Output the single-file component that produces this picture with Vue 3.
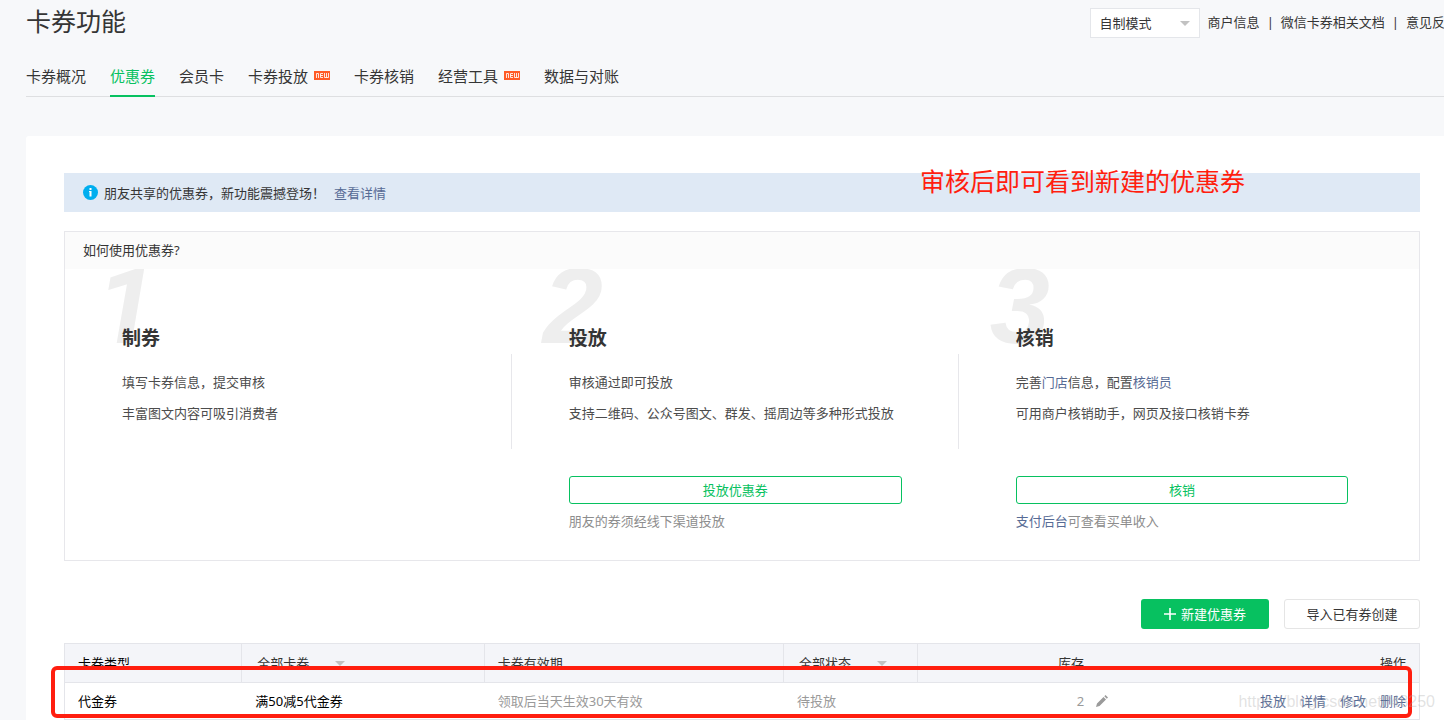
<script setup>
import { ref } from 'vue'

const tabs = [
  { label: '卡券概况' },
  { label: '优惠券', active: true },
  { label: '会员卡' },
  { label: '卡券投放', fresh: true },
  { label: '卡券核销' },
  { label: '经营工具', fresh: true },
  { label: '数据与对账' },
]

const mode = ref('自制模式')
const cardFilter = ref('全部卡券')
const stateFilter = ref('全部状态')

const coupons = [
  { type: '代金券', name: '满50减5代金券', period: '领取后当天生效30天有效', state: '待投放', stock: 2 },
]
const actions = ['投放', '详情', '修改', '删除']
</script>

<template>
  <div class="page">
    <header class="top">
      <h1>卡券功能</h1>
      <div class="tools">
        <span class="drop boxed">
          <select v-model="mode" aria-label="模式">
            <option>自制模式</option>
          </select>
          <svg class="caret" viewBox="0 0 10 5" aria-hidden="true"><path d="M0 0h10L5 5z" /></svg>
        </span>
        <nav class="links" aria-label="帮助">
          <a href="#">商户信息</a><i>|</i><a href="#">微信卡券相关文档</a><i>|</i><a href="#">意见反馈</a>
        </nav>
      </div>
    </header>

    <nav class="tabs" aria-label="卡券">
      <a v-for="t in tabs" :key="t.label" href="#" :class="{ active: t.active }">
        {{ t.label }}
        <svg v-if="t.fresh" class="new" viewBox="0 0 16 9" role="img" aria-label="new">
          <rect width="16" height="9" fill="#ff5a26" />
          <g fill="none" stroke="#fff" stroke-opacity="0.85">
            <path d="M2.5 7V2.5H4.5V7" />
            <path d="M9 2.5H6.5V6.5H9M6.5 4.5H9" />
            <path d="M10.5 2V6.5H14.5V2M12.5 2V6.5" />
          </g>
        </svg>
      </a>
    </nav>

    <main class="card">
      <div class="notice">
        <svg class="info" viewBox="0 0 15 15" aria-hidden="true">
          <circle cx="7.5" cy="7.5" r="7.5" fill="#00aeef" />
          <path d="M6.5 3h2v2h-2zM6 6h2.500v5.500h-2V7H6z" fill="#fff" />
        </svg>
        <span>朋友共享的优惠券，新功能震撼登场！</span>
        <a href="#">查看详情</a>
        <strong class="remark">审核后即可看到新建的优惠券</strong>
      </div>

      <section class="guide">
        <h2>如何使用优惠券?</h2>
        <div class="steps">
          <article class="step">
            <span class="num one">1</span>
            <h3>制券</h3>
            <div class="desc">
              <p>填写卡券信息，提交审核</p>
              <p>丰富图文内容可吸引消费者</p>
            </div>
          </article>
          <article class="step">
            <span class="num">2</span>
            <h3>投放</h3>
            <div class="desc">
              <p>审核通过即可投放</p>
              <p>支持二维码、公众号图文、群发、摇周边等多种形式投放</p>
            </div>
            <div class="act">
              <button type="button">投放优惠券</button>
              <p>朋友的券须经线下渠道投放</p>
            </div>
          </article>
          <article class="step">
            <span class="num">3</span>
            <h3>核销</h3>
            <div class="desc">
              <p>完善<a href="#">门店</a>信息，配置<a href="#">核销员</a></p>
              <p>可用商户核销助手，网页及接口核销卡券</p>
            </div>
            <div class="act">
              <button type="button">核销</button>
              <p><a href="#">支付后台</a>可查看买单收入</p>
            </div>
          </article>
        </div>
      </section>

      <div class="bar">
        <button type="button" class="primary">
          <svg viewBox="0 0 12 12" aria-hidden="true"><path d="M6 0v12M0 6h12" stroke="#fff" stroke-width="1.6" /></svg>
          新建优惠券
        </button>
        <button type="button" class="plain">导入已有券创建</button>
      </div>

      <div class="list">
        <table>
          <colgroup>
            <col class="c1" /><col class="c2" /><col class="c3" /><col class="c4" /><col class="c5" /><col />
          </colgroup>
          <thead>
            <tr>
              <th class="dark">卡券类型</th>
              <th>
                <span class="drop">
                  <select v-model="cardFilter" aria-label="卡券"><option>全部卡券</option></select>
                  <svg class="caret" viewBox="0 0 10 5" aria-hidden="true"><path d="M0 0h10L5 5z" /></svg>
                </span>
              </th>
              <th>卡券有效期</th>
              <th>
                <span class="drop">
                  <select v-model="stateFilter" aria-label="状态"><option>全部状态</option></select>
                  <svg class="caret" viewBox="0 0 10 5" aria-hidden="true"><path d="M0 0h10L5 5z" /></svg>
                </span>
              </th>
              <th class="stock">库存</th>
              <th class="ops">操作</th>
            </tr>
          </thead>
          <tbody>
            <tr v-for="c in coupons" :key="c.name">
              <td class="dark">{{ c.type }}</td>
              <td class="dark">{{ c.name }}</td>
              <td>{{ c.period }}</td>
              <td>{{ c.state }}</td>
              <td>
                <div class="qty">
                  <span>{{ c.stock }}</span>
                  <button type="button" class="edit" aria-label="修改库存">
                    <svg viewBox="0 0 12 12" aria-hidden="true">
                      <path d="M0 12l1-3.500L7.500 2 10 4.500 3.500 11zM8.300 1.200L9.500 0 12 2.500 10.800 3.700z" />
                    </svg>
                  </button>
                </div>
              </td>
              <td>
                <div class="acts"><a v-for="a in actions" :key="a" href="#">{{ a }}</a></div>
              </td>
            </tr>
          </tbody>
        </table>
        <div class="frame"></div>
        <span class="mark">https://blog.csdn.net/f48250</span>
      </div>
    </main>
  </div>
</template>

<style>
body {
  margin: 0;
  background: #f7f8fa;
}
</style>

<style scoped>
.page {
  box-sizing: border-box;
  min-height: 100vh;
  padding: 8px 0 0 26px;
  overflow: hidden;
  background: #f7f8fa;
  color: #353535;
  font: 13px/20px "Noto Sans", "Noto Sans CJK SC", sans-serif;
}
* {
  box-sizing: border-box;
}
h1, h2, h3, p {
  margin: 0;
  font-weight: 400;
}
a {
  color: #576b95;
  text-decoration: none;
}
button, select {
  margin: 0;
  padding: 0;
  font: inherit;
  color: inherit;
  background: none;
  border: 0;
  cursor: pointer;
}
.top {
  display: flex;
  justify-content: space-between;
  height: 48px;
}
h1 {
  font-size: 25px;
  line-height: 26px;
}
.tools {
  display: flex;
  align-items: flex-start;
  gap: 8px;
  margin-right: -14px;
  white-space: nowrap;
}
.drop {
  display: inline-flex;
  align-items: center;
  width: 90px;
}
.drop select {
  width: 100%;
  padding-left: 2px;
  appearance: none;
}
.drop .caret {
  flex: none;
  width: 10px;
  height: 5px;
  margin-left: -10px;
  fill: #c2c2c2;
  pointer-events: none;
}
.boxed {
  width: 110px;
  height: 30px;
  padding: 0 9px 0 7px;
  background: #fff;
  border: 1px solid #e4e6ea;
}
.links {
  line-height: 28px;
}
.links a {
  color: #353535;
}
.links i {
  padding: 0 7px;
  font-style: normal;
}
.tabs {
  display: flex;
  gap: 24px;
  height: 41px;
  border-bottom: 1px solid #dedfe1;
  font-size: 15px;
  line-height: 40px;
}
.tabs a {
  display: flex;
  align-items: center;
  gap: 6px;
  height: 41px;
  border-bottom: 2px solid transparent;
  color: #353535;
  white-space: nowrap;
}
.tabs .active {
  color: #07c160;
  border-color: #07c160;
}
.new {
  width: 16px;
  height: 9px;
}
.card {
  margin-top: 39px;
  padding: 37px 24px 0 38px;
  background: #fff;
  border-top-left-radius: 3px;
}
.notice {
  position: relative;
  display: flex;
  align-items: center;
  height: 39px;
  padding-left: 19px;
  background: #dfe9f5;
}
.info {
  width: 15px;
  height: 15px;
  margin-right: 6px;
}
.notice a {
  margin-left: 9px;
}
.remark {
  position: absolute;
  top: -10px;
  right: 175px;
  color: #ff1e0f;
  font-size: 25px;
  font-weight: 400;
  line-height: 36px;
  white-space: nowrap;
}
.guide {
  margin-top: 19px;
  border: 1px solid #e7e7eb;
}
h2 {
  padding: 0 18px;
  background: #fbfbfb;
  font-size: 13px;
  line-height: 37px;
}
.steps {
  display: grid;
  grid-template-columns: repeat(3, 33%);
  min-height: 291px;
}
.step {
  position: relative;
  overflow: hidden;
  padding-top: 54px;
}
.num {
  position: absolute;
  top: -26px;
  left: 31px;
  color: #eee;
  font: italic bold 108px/126px "Liberation Sans", Arial, sans-serif;
}
.one {
  font-family: Roboto, "Liberation Sans", sans-serif;
}
h3 {
  position: relative;
  padding-left: 57px;
  font-size: 19px;
  font-weight: 700;
  line-height: 30px;
}
.desc {
  position: relative;
  height: 95px;
  margin-top: 1px;
  padding: 13px 56px 0 57px;
  border-right: 1px solid #e7e7eb;
  color: #4c4c4c;
  line-height: 31px;
}
.step:last-child .desc {
  border-color: transparent;
}
.act {
  padding: 27px 57px 0;
  color: #8d8d8d;
}
.act button {
  width: 100%;
  height: 28px;
  border: 1px solid #07c160;
  border-radius: 3px;
  color: #07c160;
}
.act p {
  margin-top: 7px;
}
.bar {
  display: flex;
  justify-content: flex-end;
  gap: 15px;
  margin: 38px 0 14px;
}
.bar button {
  display: flex;
  align-items: center;
  justify-content: center;
  gap: 5px;
  height: 30px;
  border-radius: 3px;
}
.primary {
  width: 128px;
  background: #07c160;
  color: #fff;
}
.primary svg {
  width: 12px;
  height: 12px;
}
.bar .plain {
  width: 136px;
  border: 1px solid #e5e5e5;
}
.list {
  position: relative;
}
table {
  width: 100%;
  border: 1px solid #e4e5ea;
  border-collapse: separate;
  border-spacing: 0;
  table-layout: fixed;
}
.c1 { width: 13.1%; }
.c2 { width: 17.9%; }
.c3 { width: 22.1%; }
.c4 { width: 9.9%; }
.c5 { width: 15%; }
th, td {
  padding: 0 13px;
  text-align: left;
  font-weight: 400;
  white-space: nowrap;
}
th {
  height: 39px;
  background: #f4f5f9;
  border-bottom: 1px solid #e4e5ea;
}
th:nth-child(-n+4) {
  border-right: 1px solid #e4e5ea;
}
td {
  height: 36px;
  color: #9a9a9a;
}
.dark {
  color: #000;
}
th.stock {
  padding-right: 37px;
  text-align: right;
}
th.ops {
  text-align: right;
}
.qty, .acts {
  display: flex;
  align-items: center;
  justify-content: flex-end;
}
.qty {
  gap: 12px;
}
.acts {
  gap: 14px;
}
.edit {
  display: flex;
}
.edit svg {
  width: 12px;
  height: 12px;
  fill: #9a9a9a;
}
.frame {
  position: absolute;
  inset: 23px 8px 2px -13px;
  border: 4px solid #ff1e0f;
  border-radius: 6px;
  pointer-events: none;
}
.mark {
  position: absolute;
  right: -15px;
  bottom: 8px;
  color: rgba(170, 170, 170, 0.35);
  font: 16px/20px "Liberation Sans", Arial, sans-serif;
  pointer-events: none;
}
</style>
